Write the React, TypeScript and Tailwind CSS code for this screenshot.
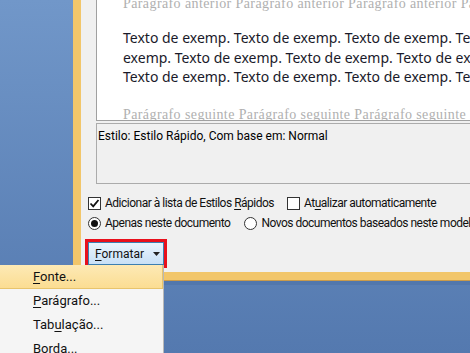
import React from "react";

const ui = { fontFamily: '"Noto Sans", "Open Sans", sans-serif' };
const ui2 = { fontFamily: 'Roboto, "Noto Sans", sans-serif' };
const serif = { fontFamily: '"Liberation Serif", serif' };

function U({ children }: { children: React.ReactNode }) {
  return <span className="underline underline-offset-2">{children}</span>;
}

export default function App() {
  const line = "Texto de exemp. Texto de exemp. Texto de exemp. Texto de exemp. Texto de exemp.";
  return (
    <div
      className="relative w-[470px] h-[353px] overflow-hidden bg-gradient-to-b from-[#7197c9] to-[#5479af]"
      style={ui}
    >
      {/* Dialog window */}
      <div className="absolute left-[73px] top-0 w-[560px] h-[280px] border-l-[8px] border-b-[8px] border-[#f2c66a] shadow-[0_1px_0_#c99a4a,0_5px_0_#5277ac]">
        <div className="h-full bg-[#f0f0f0] pl-[15px] flex flex-col">
          {/* preview */}
          <div className="flex-none h-[121px] bg-white border border-t-0 border-[#a0a0a0] pl-[26px] overflow-hidden whitespace-nowrap">
            <div className="text-[14px] leading-[14px] mt-[-3px] text-[#b0b0b0] tracking-[0.4px]" style={serif}>
              Parágrafo anterior Parágrafo anterior Parágrafo anterior Parágrafo anterior
            </div>
            <div className="mt-[17px] text-[14px] leading-[19.5px] text-[#1a1a2a]">
              <div>{line}</div>
              <div>exemp. Texto de exemp. Texto de exemp. Texto de exemp. Texto de exemp.</div>
              <div>{line}</div>
            </div>
            <div className="mt-[21px] text-[14px] leading-[14px] text-[#b0b0b0] tracking-[0.4px]" style={serif}>
              Parágrafo seguinte Parágrafo seguinte Parágrafo seguinte Parágrafo seguinte
            </div>
          </div>
          {/* description */}
          <div
            className="flex-none mt-[2px] h-[61px] border border-[#ababab] bg-[#f0f0f0] pl-[1px] pt-[4px] text-[12px] leading-[16px] text-black whitespace-nowrap"
            style={ui2}
          >
            Estilo: Estilo Rápido, Com base em: Normal
          </div>
          {/* options */}
          <div className="flex-none mt-[9px] text-[12px] leading-[16px] text-[#111] whitespace-nowrap tracking-[-0.5px]" style={ui2}>
            <div className="flex items-center h-[20px] ml-[-8px]">
              <div className="flex-none w-[13px] h-[13px] border border-[#333] bg-white flex items-center justify-center">
                <svg width="11" height="11" viewBox="0 0 11 11">
                  <path d="M1.5 5.5 L4.2 8.3 L9.5 2" stroke="#111" strokeWidth="1.8" fill="none" />
                </svg>
              </div>
              <span className="ml-[4px]">Adicionar à lista de Estilos <U>R</U>ápidos</span>
              <div className="flex-none ml-[13px] w-[13px] h-[13px] border border-[#333] bg-white" />
              <span className="ml-[4px]">At<U>u</U>alizar automaticamente</span>
            </div>
            <div className="flex items-center h-[20px] ml-[-8px]">
              <div className="flex-none w-[13px] h-[13px] rounded-full border border-[#333] bg-white flex items-center justify-center">
                <div className="w-[7px] h-[7px] rounded-full bg-[#111]" />
              </div>
              <span className="ml-[4px]">Apenas neste documento</span>
              <div className="flex-none ml-[14px] w-[13px] h-[13px] rounded-full border border-[#333] bg-white" />
              <span className="ml-[4px]">Novos documentos baseados neste modelo</span>
            </div>
          </div>
          {/* button */}
          <div className="flex-none mt-[6px] ml-[-11px] w-[82px] h-[29px] border-[3px] border-[#e8101c]">
            <div
              className="h-full border border-[#3c7fb1] bg-gradient-to-b from-[#eaf4fd] to-[#c8e0f6] flex items-center pl-[6px] text-[12px] text-[#111]"
              style={ui2}
            >
              <span><U>F</U>ormatar</span>
              <svg className="ml-[9px]" width="7" height="4" viewBox="0 0 7 4">
                <path d="M0 0 H7 L3.5 4 Z" fill="#222" />
              </svg>
            </div>
          </div>
        </div>
      </div>

      {/* Dropdown menu */}
      <div
        className="absolute left-0 top-[265px] w-[164px] h-[100px] bg-[#f5f5f5] border-r border-[#b8b8b8] text-[13px] text-[#111]"
        style={ui2}
      >
        <div className="h-[24px] bg-gradient-to-b from-[#fde9b5] to-[#fbdd92] border-b border-r border-[#e8c46c] flex items-center pl-[33px]">
          <span><U>F</U>onte...</span>
        </div>
        <div className="h-[24px] flex items-center pl-[33px]">
          <span><U>P</U>arágrafo...</span>
        </div>
        <div className="h-[24px] flex items-center pl-[33px]">
          <span>Tab<U>u</U>lação...</span>
        </div>
        <div className="h-[24px] flex items-center pl-[33px]">
          <span><U>B</U>orda...</span>
        </div>
      </div>
    </div>
  );
}
